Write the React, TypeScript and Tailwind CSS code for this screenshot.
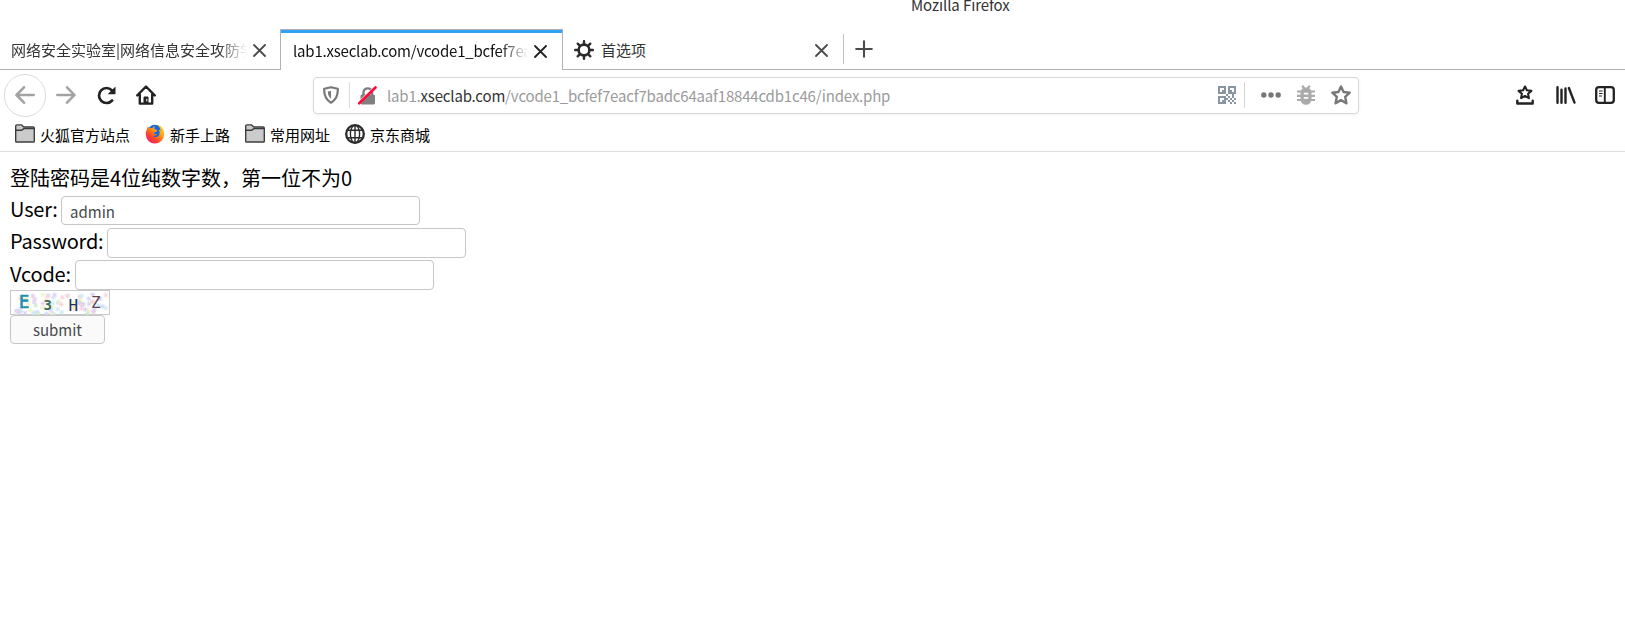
import React from "react";

const PALETTE = ["#e9cdf0", "#cdeed5", "#f7d3df", "#d2d9f7", "#f8e6cb", "#cdebf1", "#e8f5c2", "#dad0f5"];

const CLOSE = "M1 1L12 12M12 1L1 12";

function Close({ dark = false }: { dark?: boolean }) {
  return (
    <svg width="13" height="13" viewBox="0 0 13 13" fill="none" stroke={dark ? "#222" : "#4a4a4a"} strokeWidth="1.8" strokeLinecap="round">
      <path d={CLOSE} />
    </svg>
  );
}

function Folder() {
  return (
    <svg width="20" height="19" viewBox="0 0 20 19" fill="#cbcbcb" stroke="#3c3c3c" strokeWidth="1.4" strokeLinejoin="round">
      <path d="M.7 17.2V2.2Q.7 .9 2 .9H6.6L8.8 3H18Q19.3 3 19.3 4.3V17.2Q19.3 18 18.5 18H1.5Q.7 18 .7 17.2Z" />
      <path d="M1 6.2H6.8L8.8 4.6H19" fill="none" />
    </svg>
  );
}

function Firefox() {
  return (
    <svg width="20" height="20" viewBox="0 0 20 20">
      <defs>
        <linearGradient id="flame" x1="1" y1="0" x2="0.2" y2="1">
          <stop offset="0" stopColor="#ffe32b" />
          <stop offset=".4" stopColor="#ffa415" />
          <stop offset=".7" stopColor="#ff4a25" />
          <stop offset="1" stopColor="#f5156c" />
        </linearGradient>
      </defs>
      <circle cx="10" cy="8.6" r="7.8" fill="#1769dc" />
      <path d="M2.6 2.5L4.8 4.3Q6.3 3.8 7.3 4.2Q8.4 2.5 10 2.3Q8.8 4 9.5 5.2Q12.5 5.2 12 7.1Q11.8 7.9 9.8 8.3Q8.8 9.2 9.1 10.1Q10.9 9.5 12.1 10.6Q10.5 12 8.2 12.2Q11.9 14.6 14.3 11Q15.7 8.2 13.6 5.4Q14.8 5.7 15.6 6.8Q15.2 2.8 11.8 .8Q19 2.1 19.2 10.3A9.2 9.2 0 0 1 .8 10.4Q.7 7.7 1.9 5.3Z" fill="url(#flame)" />
    </svg>
  );
}

function Globe() {
  return (
    <svg width="20" height="20" viewBox="0 0 20 20" fill="none" stroke="#2b2b2b" strokeWidth="1.4">
      <circle cx="10" cy="10" r="8.8" strokeWidth="2.3" />
      <ellipse cx="10" cy="10" rx="4.6" ry="8.8" />
      <path d="M10 1V19M3 6.3H17M3 13.7H17" />
    </svg>
  );
}

function Gear() {
  return (
    <svg width="20" height="20" viewBox="0 0 20 20" fill="none" stroke="#2b2b2b" strokeLinecap="round">
      <circle cx="10" cy="10" r="5.4" strokeWidth="2.6" />
      <path strokeWidth="2.4" d="M10 1.2V4M10 16V18.8M1.2 10H4M16 10H18.8M3.7 3.7L5.7 5.7M14.3 14.3L16.3 16.3M3.7 16.3L5.7 14.3M14.3 5.7L16.3 3.7" />
    </svg>
  );
}

const QR = [
  "111101111",
  "100101001",
  "101101101",
  "111101111",
  "000010010",
  "111101010",
  "100110101",
  "101101010",
  "111100101",
];

function QrCode() {
  return (
    <svg width="18" height="18" viewBox="0 0 9 9" fill="#8a95a3">
      {QR.flatMap((row, y) => row.split("").map((c, x) => (c === "1" ? <rect key={x + "-" + y} x={x} y={y} width="1" height="1" /> : null)))}
    </svg>
  );
}

function Captcha() {
  const marks: React.ReactNode[] = [];
  let seed = 17;
  const next = () => {
    seed = (seed * 1103515245 + 12345) % 2147483648;
    return seed / 2147483648;
  };
  for (let i = 0; i < 75; i++) {
    const x = 6 + next() * 92;
    const y = 4 + next() * 20;
    marks.push(
      <path key={i} d={`M${x - 2.5} ${y}h5M${x} ${y - 2.5}v5M${x - 2} ${y - 2}l4 4M${x + 2} ${y - 2}l-4 4`} stroke={PALETTE[Math.floor(next() * 8)]} strokeWidth="0.9" />,
    );
  }
  return (
    <svg width="100" height="25" viewBox="0 0 100 25" className="block" fontFamily="'DejaVu Sans Mono', monospace">
      <rect x=".5" y=".5" width="99" height="24" fill="#fff" stroke="#c8c8c8" />
      {marks}
      <text x="9" y="18" fontSize="17" fill="#2090b0" stroke="#2090b0" strokeWidth=".7">E</text>
      <text x="33.5" y="20" fontSize="14" fontWeight="700" fill="#3f6b58">3</text>
      <text x="58.5" y="21" fontSize="16" fill="#20305c">H</text>
      <text x="81" y="17.5" fontSize="16" fill="#5b4450">Z</text>
    </svg>
  );
}

function Field({ label, value, row, box, text }: { label: string; value: string; row: string; box: string; text: string }) {
  return (
    <div className={"flex items-start " + row}>
      <label className={"block whitespace-nowrap tracking-[-0.2px] " + text}>{label}</label>
      <input className={"w-[359px] rounded-[4px] border border-[#c6c6c6] bg-white px-[8px] pt-[1px] text-[15px] text-[#46484a] outline-none " + box} defaultValue={value} aria-label={label} />
    </div>
  );
}

export default function App() {
  return (
    <div className="flex h-[622px] w-[1625px] flex-col overflow-hidden bg-white font-['Noto_Sans_CJK_SC',sans-serif] text-[15px] text-[#1c1c1c]">
      <header className="flex h-[29px] justify-start pl-[911px] text-[15px] leading-[22px] tracking-[-0.1px] text-[#333]">
        <span className="-mt-[6px]">Mozilla Firefox</span>
      </header>

      <nav className="flex h-[41px]">
        <div className="flex w-[280px] items-center border-b border-[#b1b1b3] pr-[14px] pl-[11px] text-[#333]">
          <span className="w-[236px] overflow-hidden pt-[2px] whitespace-nowrap [mask-image:linear-gradient(to_right,#000_88%,transparent)]">网络安全实验室|网络信息安全攻防学习平台</span>
          <span className="ml-[6px] pt-[2px]"><Close /></span>
        </div>
        <div className="flex w-[283px] flex-col border-x border-t border-[#b1b1b3]">
          <div className="h-[3px] bg-[#2ea2f5]" />
          <div className="flex flex-1 items-center pb-[1px] pl-[12px] text-[#111]">
            <span className="w-[235px] overflow-hidden tracking-[-0.2px] whitespace-nowrap [mask-image:linear-gradient(to_right,#000_88%,transparent)]">lab1.xseclab.com/vcode1_bcfef7eacf7badc</span>
            <span className="ml-[6px]"><Close dark /></span>
          </div>
        </div>
        <div className="flex flex-1 items-center border-b border-[#b1b1b3] pl-[11px] text-[#333]">
          <div className="pt-[1px]"><Gear /></div>
          <span className="ml-[7px] w-[206px] pt-[2px]">首选项</span>
          <span className="ml-[8px] pt-[2px]"><Close /></span>
          <div className="ml-[15px] h-[30px] w-px bg-[#c0c0c0]" />
          <svg className="mb-[1px] ml-[11px]" width="18" height="18" viewBox="0 0 18 18" stroke="#4a4a4a" strokeWidth="2.1" strokeLinecap="round"><path d="M9 1.2V16.8M1.2 9H16.8" /></svg>
        </div>
      </nav>

      <div className="flex h-[50px] items-center pl-[4px]">
        <div className="flex h-[43px] w-[42px] items-center justify-center rounded-full border border-[#dcdcdc]">
          <svg width="20" height="18" viewBox="0 0 20 18" fill="none" stroke="#a3a3a3" strokeWidth="2.6" strokeLinecap="round" strokeLinejoin="round"><path d="M18.7 9H1.5M9 1.3L1.5 9L9 16.7" /></svg>
        </div>
        <svg className="ml-[10px]" width="20" height="18" viewBox="0 0 20 18" fill="none" stroke="#a3a3a3" strokeWidth="2.5" strokeLinecap="round" strokeLinejoin="round"><path d="M1.3 9H18.5M11 1.3L18.5 9L11 16.7" /></svg>
        <svg className="ml-[20px]" width="20" height="19" viewBox="0 0 20 19" fill="none" stroke="#222" strokeWidth="2.7" strokeLinecap="round"><path d="M16.1 14.5A7.5 7.5 0 1 1 15.8 4.2" /><path d="M19.5 .4V8.3H11.6Z" fill="#222" stroke="none" /></svg>
        <svg className="ml-[20px]" width="20" height="20" viewBox="0 0 20 20" fill="none" stroke="#222" strokeWidth="2.4" strokeLinecap="round" strokeLinejoin="round"><path d="M1.3 10.4L10 1.5L18.7 10.4M3.8 9.8V18.6H16.2V9.8" /><path d="M8 18V12H12V18" fill="#222" strokeWidth="1" /><path d="M10.8 14.2V16" stroke="#fff" strokeWidth="1" /></svg>

        <div className="ml-[157px] flex h-[37px] w-[1046px] items-center rounded-[4px] border border-[#d7d7db] pl-[9px] shadow-[0_1px_4px_rgba(0,0,0,0.06)]">
          <svg width="16" height="18" viewBox="0 0 16 18" fill="none" stroke="#777" strokeWidth="2.2"><path d="M8 1.2L14.8 2.8Q15.3 12.5 8 16.7Q.7 12.5 1.2 2.8Z" strokeLinejoin="round" /><path d="M8 5V12.7Q5 10.5 4.8 5.5Z" fill="#777" stroke="none" /></svg>
          <div className="ml-[10px] h-[26px] w-px bg-[#dcdcdc]" />
          <svg className="ml-[8px]" width="19" height="19" viewBox="0 0 19 19"><path d="M5.5 9V6A4.3 4.3 0 0 1 14 6V9" fill="none" stroke="#808080" strokeWidth="2.4" /><rect x="2.5" y="8.5" width="14.5" height="10" rx="1.5" fill="#808080" /><path d="M0 16.8L16.5 1" stroke="#fff" strokeWidth="1.4" /><path d="M1.2 17.3L17.5 1.5" stroke="#ff0a3b" strokeWidth="2.6" strokeLinecap="round" /></svg>
          <span className="ml-[10px] w-[831px] pt-[3px] text-[15px] tracking-[-0.18px] whitespace-nowrap text-[#9b9b9b]">lab1.<span className="text-[#333]">xseclab.com</span>/vcode1_bcfef7eacf7badc64aaf18844cdb1c46/index.php</span>
          <QrCode />
          <div className="ml-[8px] h-[26px] w-px bg-[#d5d5d9]" />
          <svg className="ml-[16px]" width="20" height="6" viewBox="0 0 20 6" fill="#777"><circle cx="2.8" cy="3" r="2.7" /><circle cx="10" cy="3" r="2.7" /><circle cx="17.2" cy="3" r="2.7" /></svg>
          <svg className="ml-[16px]" width="18" height="20" viewBox="0 0 18 20"><path d="M5.2 .8L7.5 3.5M12.8 .8L10.5 3.5M0 6.5H18M0 10.8H18M0 15H18" stroke="#aaa" strokeWidth="2.2" /><path d="M3.5 6.5Q4.5 2.5 9 2.5T14.5 6.5V14Q14 19.8 9 19.8T3.5 14Z" fill="#aaa" /><path d="M6.8 8.7H11.2M6.8 12.9H11.2" stroke="#fff" strokeWidth="1.7" /></svg>
          <svg className="ml-[16px]" width="20" height="20" viewBox="0 0 20 20" fill="none" stroke="#777" strokeWidth="2.4" strokeLinejoin="round"><path d="M10 1.5L12.6 7L18.7 7.7L14.2 11.9L15.4 18.3L10 15.1L4.6 18.3L5.8 11.9L1.3 7.7L7.4 7Z" /></svg>
        </div>

        <svg className="ml-[157px]" width="18" height="20" viewBox="0 0 18 20" fill="none" stroke="#222" strokeLinejoin="round" strokeLinecap="round"><path d="M9 1.5L10.9 5.3L15.4 5.9L12.1 8.8L12.9 13.1L9 11L5.1 13.1L5.9 8.8L2.6 5.9L7.1 5.3Z" strokeWidth="2.1" /><path d="M1.3 15.8V18.5H16.7V15.8" strokeWidth="2.4" /></svg>
        <svg className="ml-[22px]" width="20" height="18" viewBox="0 0 20 18" fill="none" stroke="#222" strokeWidth="2.4" strokeLinecap="round"><path d="M1.5 1.2V16.8M5.5 3.7V16.8M9.5 2.5V16.8M12.9 2L18.5 16.6" /></svg>
        <svg className="ml-[19px]" width="20" height="18" viewBox="0 0 20 18" fill="none" stroke="#222" strokeWidth="2.3"><rect x="1.2" y="1.2" width="17.6" height="15.6" rx="2.8" /><path d="M9.8 1V17" strokeWidth="1.9" /><path d="M4 5H7.5M4 7.5H7.5M4 10H7" strokeWidth="1.2" /></svg>
      </div>

      <div className="flex h-[32px] items-center border-b border-[#dedede] pb-[4px] pl-[15px] text-[15px] text-black">
        <Folder /><span className="ml-[5px] w-[105px] pt-[3px]">火狐官方站点</span>
        <Firefox /><span className="ml-[5px] w-[75px] pt-[3px]">新手上路</span>
        <Folder /><span className="ml-[5px] w-[75px] pt-[3px]">常用网址</span>
        <Globe /><span className="ml-[5px] pt-[3px]">京东商城</span>
      </div>

      <main className="flex flex-col items-start pt-[11px] pl-[10px] text-[20px] text-black">
        <p className="h-[33px] leading-[29px]">登陆密码是4位纯数字数，第一位不为0</p>
        <Field label="User:" value="admin" row="h-[32px]" box="h-[29px]" text="w-[51px] leading-[25px]" />
        <Field label="Password:" value="" row="h-[32px]" box="h-[30px]" text="w-[97px] leading-[25px]" />
        <Field label="Vcode:" value="" row="h-[30px]" box="h-[30px]" text="w-[65px] leading-[27px]" />
        <Captcha />
        <button className="h-[29px] w-[95px] rounded-[4px] border border-[#c6c6c6] bg-[#fafafa] pt-[1px] text-[15px] leading-[26px] text-[#46484a]">submit</button>
      </main>
    </div>
  );
}
